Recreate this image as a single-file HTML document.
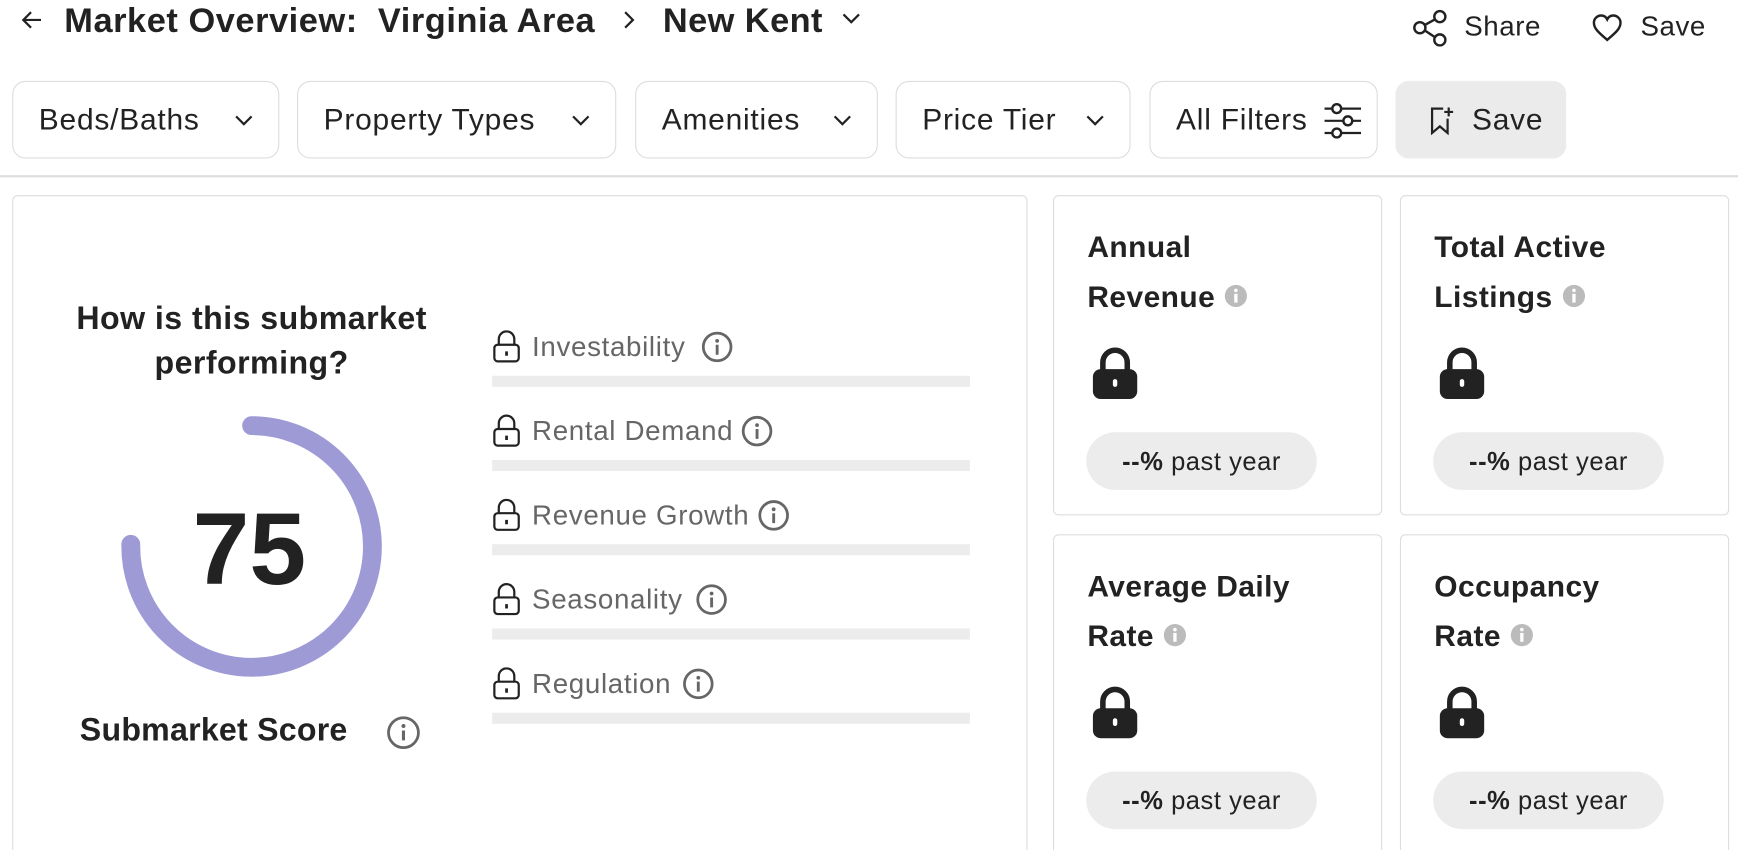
<!DOCTYPE html>
<html><head><meta charset="utf-8"><style>
*{box-sizing:border-box;margin:0;padding:0}
html,body{width:1738px;height:850px;overflow:hidden;background:#fff}
#w{position:absolute;left:0;top:0;width:1568px;height:767px;overflow:hidden;transform:scale(1.10842);transform-origin:0 0;font-family:"Liberation Sans",sans-serif;color:#222}
.a{position:absolute;white-space:nowrap}
.btn{position:absolute;top:73px;height:70px;border:1.5px solid #ddd;border-radius:12px;font-size:27px;letter-spacing:0.7px;display:flex;align-items:center;padding-left:23px}
.card{position:absolute;border:1.5px solid #ddd;border-radius:5px}
.mt{font-size:25px;letter-spacing:0.6px;color:#666}
.bar{position:absolute;left:444px;width:431px;height:10px;background:#ececec}
.ct{position:absolute;left:30px;top:24px;font-size:27px;letter-spacing:0.4px;font-weight:bold;line-height:45px;color:#222}
.pill{position:absolute;left:29px;top:213px;width:208px;height:52px;border-radius:26px;background:#ececec;font-size:23px;letter-spacing:0.5px;display:flex;align-items:center;justify-content:center}
.lk{position:absolute;left:34px;top:136px}
</style></head><body><div id="w">
<svg class="a" style="left:18px;top:8px" width="22" height="20" viewBox="0 0 22 20"><path d="M19 10H3M10 3L3 10l7 7" fill="none" stroke="#222" stroke-width="2"/></svg>
<div class="a" style="left:58px;top:1px;font-size:31px;letter-spacing:0.5px;font-weight:bold;line-height:36px">Market Overview:&nbsp; Virginia Area</div>
<svg class="a" style="left:560px;top:8px" width="14" height="20"><path d="M4 3l7 7-7 7" fill="none" stroke="#222" stroke-width="2"/></svg>
<div class="a" style="left:598px;top:1px;font-size:31px;letter-spacing:0.4px;font-weight:bold;line-height:36px">New Kent</div>
<svg class="a" style="left:758px;top:10px" width="20" height="14"><path d="M3 3l7 7 7-7" fill="none" stroke="#222" stroke-width="2"/></svg>
<svg class="a" style="left:1274px;top:8px" width="34" height="34" viewBox="0 0 34 34" fill="none" stroke="#222" stroke-width="2.2"><circle cx="25" cy="7" r="5"/><circle cx="7" cy="17" r="5"/><circle cx="25" cy="28" r="5"/><path d="M11.5 14.5L20.5 9.5M11.5 19.5l9 6"/></svg>
<div class="a" style="left:1321px;top:10px;font-size:25px;letter-spacing:0.5px">Share</div>
<svg class="a" style="left:1435px;top:11px" width="30" height="28" viewBox="0 0 30 28"><path d="M15 25C8 19 3 15 3 9.5 3 6 6 3 9.5 3 12 3 14 4.5 15 6.5 16 4.5 18 3 20.5 3 24 3 27 6 27 9.5 27 15 22 19 15 25z" fill="none" stroke="#222" stroke-width="2.2"/></svg>
<div class="a" style="left:1480px;top:10px;font-size:25px;letter-spacing:0.5px">Save</div>

<div class="btn" style="left:11px;width:241px">Beds/Baths<svg style="position:absolute;right:22px;top:29px" width="18" height="12"><path d="M2 2l7 7 7-7" fill="none" stroke="#222" stroke-width="2"/></svg></div>
<div class="btn" style="left:268px;width:288px">Property Types<svg style="position:absolute;right:22px;top:29px" width="18" height="12"><path d="M2 2l7 7 7-7" fill="none" stroke="#222" stroke-width="2"/></svg></div>
<div class="btn" style="left:573px;width:219px">Amenities<svg style="position:absolute;right:22px;top:29px" width="18" height="12"><path d="M2 2l7 7 7-7" fill="none" stroke="#222" stroke-width="2"/></svg></div>
<div class="btn" style="left:808px;width:212px">Price Tier<svg style="position:absolute;right:22px;top:29px" width="18" height="12"><path d="M2 2l7 7 7-7" fill="none" stroke="#222" stroke-width="2"/></svg></div>
<div class="btn" style="left:1037px;width:206px">All Filters<svg style="position:absolute;right:14px;top:17px" width="36" height="36" viewBox="0 0 36 36" fill="none" stroke="#222" stroke-width="2.2"><path d="M3 7h33M3 18h33M3 29h33" stroke-width="2"/><circle cx="14" cy="7" r="4" fill="#fff"/><circle cx="24" cy="18" r="4" fill="#fff"/><circle cx="14" cy="29" r="4" fill="#fff"/></svg></div>
<div class="btn" style="left:1259px;width:154px;background:#ebebeb;border-color:#ebebeb;padding-left:68px">Save<svg style="position:absolute;left:29px;top:22px" width="24" height="26" viewBox="0 0 24 26" fill="none" stroke="#222" stroke-width="2"><path d="M13 2H3v22l7-6 7 6V11"/><path d="M18 1v8M14 5h8"/></svg></div>

<div class="a" style="left:0;top:158px;width:1568px;height:1.5px;background:#ddd"></div>

<div class="card" style="left:11px;top:176px;width:916px;height:620px"></div>
<div class="a" style="left:17px;top:268px;width:420px;text-align:center;font-size:29px;letter-spacing:0.4px;font-weight:bold;line-height:40px;white-space:normal">How is this submarket<br>performing?</div>
<svg class="a" style="left:0;top:0" width="460" height="767"><path d="M227 384A109 109 0 1 1 118 491" fill="none" stroke="#9e9ad5" stroke-width="17" stroke-linecap="round"/></svg>
<div class="a" style="left:125px;top:444px;width:200px;text-align:center;font-size:92px;font-weight:bold;line-height:104px">75</div>
<div class="a" style="left:72px;top:643px;font-size:29px;letter-spacing:0.2px;font-weight:bold">Submarket Score</div>
<svg class="a" style="left:348px;top:645px" width="32" height="32"><circle cx="16" cy="16" r="13.5" fill="none" stroke="#666" stroke-width="2.5"/><circle cx="16" cy="10" r="1.8" fill="#666"/><path d="M16 14v9" stroke="#666" stroke-width="2.8"/></svg>

<div class="a" style="left:444px;top:298px"><svg width="26" height="30" viewBox="0 0 26 30" fill="none" stroke="#222" stroke-width="2"><path d="M6 13V8a7 7 0 0 1 14 0v5"/><rect x="2" y="13" width="22" height="15" rx="3"/><path d="M13 19v4" stroke-width="2.5"/></svg></div>
<div class="a mt" style="left:480px;top:299px">Investability</div>
<svg class="a" style="left:632px;top:298px" width="30" height="30"><circle cx="15" cy="15" r="12.5" fill="none" stroke="#666" stroke-width="2.5"/><circle cx="15" cy="9.5" r="1.7" fill="#666"/><path d="M15 13v9" stroke="#666" stroke-width="2.6"/></svg>
<div class="bar" style="top:339px"></div>

<div class="a" style="left:444px;top:374px"><svg width="26" height="30" viewBox="0 0 26 30" fill="none" stroke="#222" stroke-width="2"><path d="M6 13V8a7 7 0 0 1 14 0v5"/><rect x="2" y="13" width="22" height="15" rx="3"/><path d="M13 19v4" stroke-width="2.5"/></svg></div>
<div class="a mt" style="left:480px;top:375px">Rental Demand</div>
<svg class="a" style="left:668px;top:374px" width="30" height="30"><circle cx="15" cy="15" r="12.5" fill="none" stroke="#666" stroke-width="2.5"/><circle cx="15" cy="9.5" r="1.7" fill="#666"/><path d="M15 13v9" stroke="#666" stroke-width="2.6"/></svg>
<div class="bar" style="top:415px"></div>

<div class="a" style="left:444px;top:450px"><svg width="26" height="30" viewBox="0 0 26 30" fill="none" stroke="#222" stroke-width="2"><path d="M6 13V8a7 7 0 0 1 14 0v5"/><rect x="2" y="13" width="22" height="15" rx="3"/><path d="M13 19v4" stroke-width="2.5"/></svg></div>
<div class="a mt" style="left:480px;top:451px">Revenue Growth</div>
<svg class="a" style="left:683px;top:450px" width="30" height="30"><circle cx="15" cy="15" r="12.5" fill="none" stroke="#666" stroke-width="2.5"/><circle cx="15" cy="9.5" r="1.7" fill="#666"/><path d="M15 13v9" stroke="#666" stroke-width="2.6"/></svg>
<div class="bar" style="top:491px"></div>

<div class="a" style="left:444px;top:526px"><svg width="26" height="30" viewBox="0 0 26 30" fill="none" stroke="#222" stroke-width="2"><path d="M6 13V8a7 7 0 0 1 14 0v5"/><rect x="2" y="13" width="22" height="15" rx="3"/><path d="M13 19v4" stroke-width="2.5"/></svg></div>
<div class="a mt" style="left:480px;top:527px">Seasonality</div>
<svg class="a" style="left:627px;top:526px" width="30" height="30"><circle cx="15" cy="15" r="12.5" fill="none" stroke="#666" stroke-width="2.5"/><circle cx="15" cy="9.5" r="1.7" fill="#666"/><path d="M15 13v9" stroke="#666" stroke-width="2.6"/></svg>
<div class="bar" style="top:567px"></div>

<div class="a" style="left:444px;top:602px"><svg width="26" height="30" viewBox="0 0 26 30" fill="none" stroke="#222" stroke-width="2"><path d="M6 13V8a7 7 0 0 1 14 0v5"/><rect x="2" y="13" width="22" height="15" rx="3"/><path d="M13 19v4" stroke-width="2.5"/></svg></div>
<div class="a mt" style="left:480px;top:603px">Regulation</div>
<svg class="a" style="left:615px;top:602px" width="30" height="30"><circle cx="15" cy="15" r="12.5" fill="none" stroke="#666" stroke-width="2.5"/><circle cx="15" cy="9.5" r="1.7" fill="#666"/><path d="M15 13v9" stroke="#666" stroke-width="2.6"/></svg>
<div class="bar" style="top:643px"></div>

<div class="card" style="left:950px;top:176px;width:297px;height:289px">
<div class="ct">Annual<br>Revenue <svg width="22" height="22" style="vertical-align:-1px"><circle cx="11" cy="11" r="10" fill="#bbb"/><rect x="9.5" y="9" width="3" height="8" fill="#fff"/><circle cx="11" cy="6" r="1.6" fill="#fff"/></svg></div>
<svg class="lk" width="42" height="48" viewBox="0 0 42 48"><path d="M10 22V14a11 11 0 0 1 22 0v8" fill="none" stroke="#222" stroke-width="5"/><rect x="1" y="20" width="40" height="27" rx="7" fill="#222"/><rect x="19" y="29" width="4" height="7" rx="2" fill="#fff"/></svg>
<div class="pill"><b>--%</b>&nbsp;past year</div></div>
<div class="card" style="left:1263px;top:176px;width:297px;height:289px">
<div class="ct">Total Active<br>Listings <svg width="22" height="22" style="vertical-align:-1px"><circle cx="11" cy="11" r="10" fill="#bbb"/><rect x="9.5" y="9" width="3" height="8" fill="#fff"/><circle cx="11" cy="6" r="1.6" fill="#fff"/></svg></div>
<svg class="lk" width="42" height="48" viewBox="0 0 42 48"><path d="M10 22V14a11 11 0 0 1 22 0v8" fill="none" stroke="#222" stroke-width="5"/><rect x="1" y="20" width="40" height="27" rx="7" fill="#222"/><rect x="19" y="29" width="4" height="7" rx="2" fill="#fff"/></svg>
<div class="pill"><b>--%</b>&nbsp;past year</div></div>
<div class="card" style="left:950px;top:482px;width:297px;height:320px">
<div class="ct">Average Daily<br>Rate <svg width="22" height="22" style="vertical-align:-1px"><circle cx="11" cy="11" r="10" fill="#bbb"/><rect x="9.5" y="9" width="3" height="8" fill="#fff"/><circle cx="11" cy="6" r="1.6" fill="#fff"/></svg></div>
<svg class="lk" width="42" height="48" viewBox="0 0 42 48"><path d="M10 22V14a11 11 0 0 1 22 0v8" fill="none" stroke="#222" stroke-width="5"/><rect x="1" y="20" width="40" height="27" rx="7" fill="#222"/><rect x="19" y="29" width="4" height="7" rx="2" fill="#fff"/></svg>
<div class="pill"><b>--%</b>&nbsp;past year</div></div>
<div class="card" style="left:1263px;top:482px;width:297px;height:320px">
<div class="ct">Occupancy<br>Rate <svg width="22" height="22" style="vertical-align:-1px"><circle cx="11" cy="11" r="10" fill="#bbb"/><rect x="9.5" y="9" width="3" height="8" fill="#fff"/><circle cx="11" cy="6" r="1.6" fill="#fff"/></svg></div>
<svg class="lk" width="42" height="48" viewBox="0 0 42 48"><path d="M10 22V14a11 11 0 0 1 22 0v8" fill="none" stroke="#222" stroke-width="5"/><rect x="1" y="20" width="40" height="27" rx="7" fill="#222"/><rect x="19" y="29" width="4" height="7" rx="2" fill="#fff"/></svg>
<div class="pill"><b>--%</b>&nbsp;past year</div></div>
</div></body></html>
